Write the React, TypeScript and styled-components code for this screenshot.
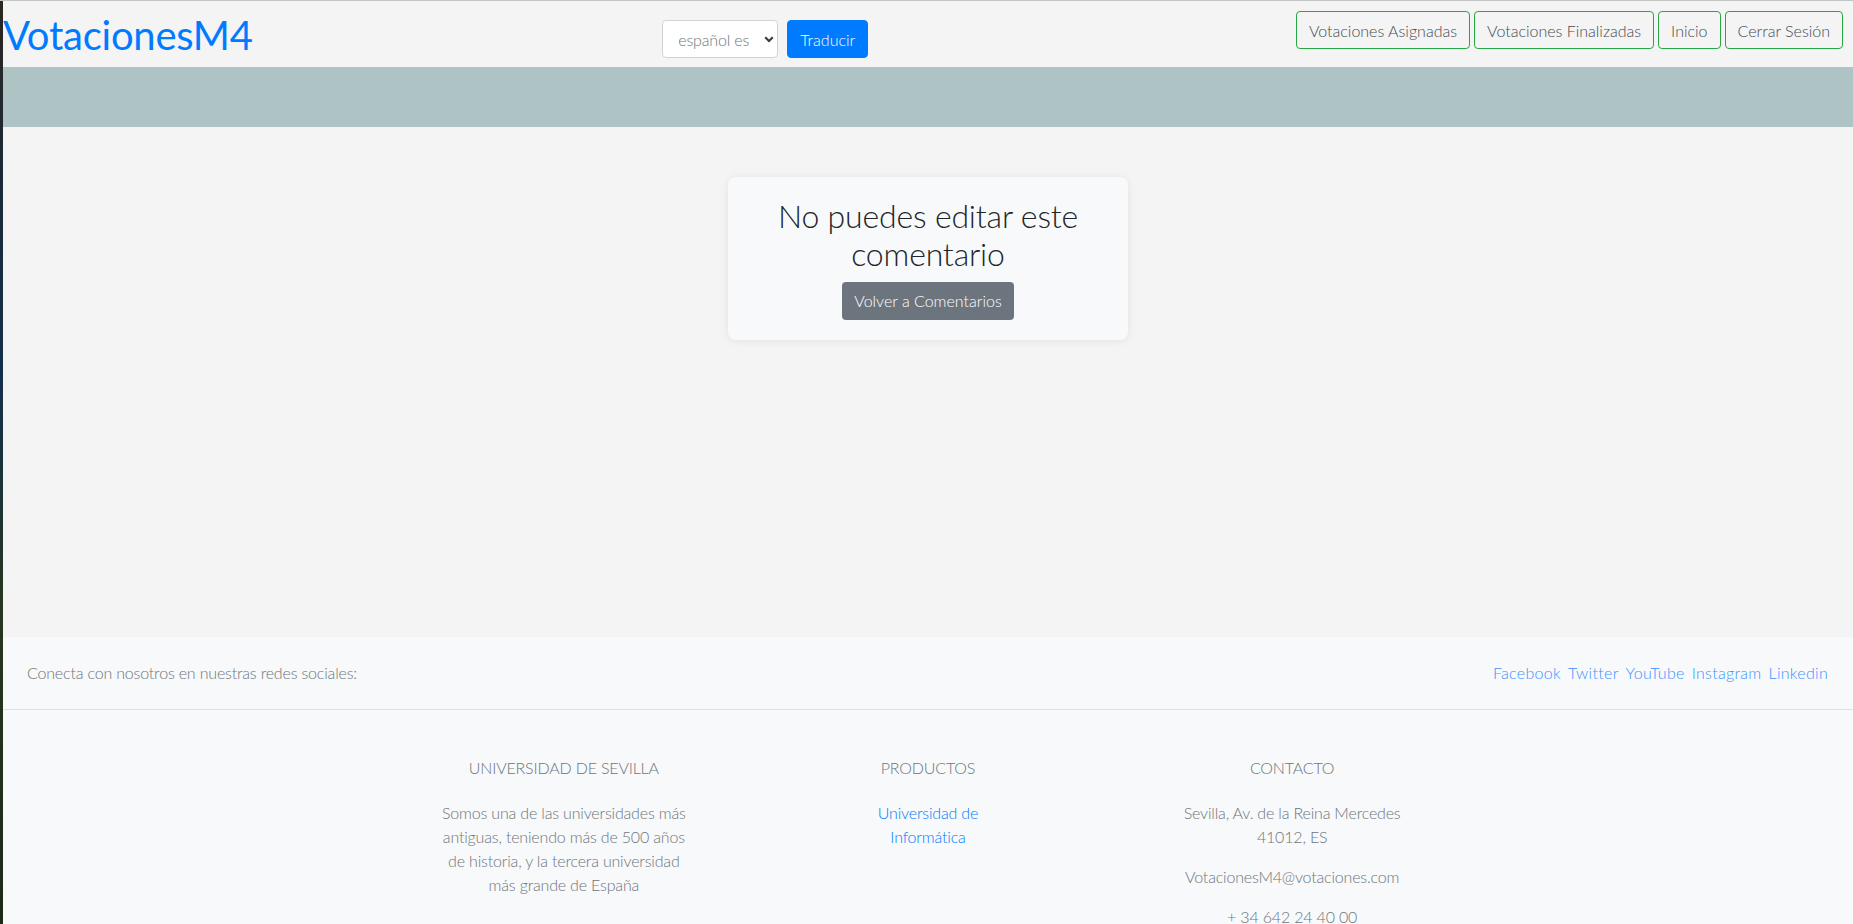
import React from 'react';
import styled, { createGlobalStyle } from 'styled-components';

const GlobalStyle = createGlobalStyle`
  html { scrollbar-width: none; }
  html::-webkit-scrollbar, body::-webkit-scrollbar { display: none; }
  * { box-sizing: border-box; }
  body {
    margin: 0;
    font-family: Lato, "Open Sans", sans-serif;
    font-weight: 300;
    font-size: 16px;
    letter-spacing: -0.011em;
    background: #1b2633;
    color: #212529;
  }
`;

const Shell = styled.div`
  display: flex;
  min-height: 100vh;
  border-top: 1px solid #c4c4c4;
`;

const DesktopEdge = styled.div`
  flex: 0 0 3px;
  background: linear-gradient(
    180deg,
    #2b2620 0%,
    #1a2a3a 20%,
    #14304a 40%,
    #26361f 65%,
    #1b2a17 100%
  );
`;

const Page = styled.div`
  flex: 1;
  min-width: 0;
  background: #f4f4f4;
  display: flex;
  flex-direction: column;
`;

const Header = styled.header`
  height: 66px;
  display: flex;
  align-items: flex-start;
  justify-content: space-between;
  padding: 10px 10px 0 0;
`;

const Logo = styled.a`
  font-family: Lato, sans-serif;
  font-weight: 400;
  font-size: 40px;
  line-height: 48px;
  letter-spacing: -0.006em;
  color: #007bff;
  text-decoration: none;
`;

const TranslateGroup = styled.form`
  display: flex;
  gap: 9px;
  margin: 9px 18px 0 0;
`;

const SelectWrap = styled.div`
  position: relative;
  display: flex;
`;

const LangSelect = styled.select`
  appearance: none;
  -webkit-appearance: none;
  width: 116px;
  height: 38px;
  padding: 0 0 0 15px;
  border: 1px solid #ced4da;
  border-radius: 4px;
  background: #fff;
  font-family: Lato, sans-serif;
  font-weight: 300;
  font-size: 16px;
  letter-spacing: -0.011em;
  color: #6c757d;
`;

const Chevron = styled.svg`
  position: absolute;
  right: 4px;
  top: 14px;
  width: 10px;
  height: 10px;
  pointer-events: none;
`;

const PrimaryButton = styled.button`
  height: 38px;
  padding: 0 12px;
  border: 1px solid #007bff;
  border-radius: 4px;
  background: #007bff;
  color: #fff;
  font-family: Lato, sans-serif;
  font-weight: 300;
  font-size: 16px;
  letter-spacing: 0;
`;

const RightNav = styled.nav`
  display: flex;
  gap: 4px;
`;

const NavButton = styled.a`
  display: inline-flex;
  align-items: center;
  height: 38px;
  padding: 0 12px;
  border: 1px solid #28a745;
  border-radius: 4px;
  color: #444b52;
  text-decoration: none;
  font-size: 16px;
  font-weight: 300;
  letter-spacing: 0;
`;

const Band = styled.div`
  height: 60px;
  background: #aec3c4;
`;

const Main = styled.main`
  min-height: 510px;
  display: flex;
  justify-content: center;
  align-items: flex-start;
  padding-top: 50px;
`;

const Card = styled.div`
  width: 400px;
  padding: 20px;
  background: #f8f9fa;
  border-radius: 8px;
  box-shadow: 0 1px 8px rgba(0, 0, 0, 0.08);
  text-align: center;
`;

const CardTitle = styled.h1`
  margin: 0 0 8px;
  font-size: 32px;
  font-weight: 300;
  line-height: 1.2;
  color: #212529;
`;

const SecondaryButton = styled.a`
  display: inline-flex;
  align-items: center;
  height: 38px;
  padding: 0 12px;
  border-radius: 4px;
  background: #6c757d;
  color: #fff;
  text-decoration: none;
  font-size: 16px;
  font-weight: 300;
  letter-spacing: 0;
`;

const Footer = styled.footer`
  background: #f8f9fa;
  color: #6c757d;
  flex: 1;
`;

const SocialBar = styled.section`
  display: flex;
  justify-content: space-between;
  align-items: center;
  padding: 24px 25px 24px 24px;
  line-height: 24px;
  border-bottom: 1px solid #dee2e6;
`;

const SocialLinks = styled.div`
  display: flex;
  gap: 7px;
`;

const SocialLink = styled.a`
  color: #3a92ff;
  font-weight: 300;
  letter-spacing: 0.3px;
  text-decoration: none;
`;

const Link = styled.a`
  color: #007bff;
  text-decoration: none;
`;

const Columns = styled.div`
  width: 1140px;
  margin: 0 auto;
  padding-top: 48px;
  display: flex;
  justify-content: space-around;
`;

const Column = styled.div<{ $w: number }>`
  width: ${(p) => p.$w}px;
  padding: 0 15px;
  text-align: center;
`;

const ColTitle = styled.h6`
  margin: 0 0 24px;
  font-size: 16px;
  font-weight: 300;
  line-height: 1.2;
  text-transform: uppercase;
  color: #6c757d;
`;

const ColText = styled.p`
  margin: 0 0 16px;
  line-height: 24px;
`;

export default function App() {
  return (
    <>
      <GlobalStyle />
      <Shell>
        <DesktopEdge />
        <Page>
          <Header>
            <Logo href="#">VotacionesM4</Logo>
            <TranslateGroup onSubmit={(e) => e.preventDefault()}>
              <SelectWrap>
                <LangSelect defaultValue="es">
                  <option value="es">español es</option>
                  <option value="en">english en</option>
                </LangSelect>
                <Chevron viewBox="0 0 10 10">
                  <path d="M1.2 3.2 L5 7 L8.8 3.2" fill="none" stroke="#343a40" strokeWidth="2" />
                </Chevron>
              </SelectWrap>
              <PrimaryButton type="submit">Traducir</PrimaryButton>
            </TranslateGroup>
            <RightNav>
              <NavButton href="#">Votaciones Asignadas</NavButton>
              <NavButton href="#">Votaciones Finalizadas</NavButton>
              <NavButton href="#">Inicio</NavButton>
              <NavButton href="#">Cerrar Sesión</NavButton>
            </RightNav>
          </Header>
          <Band />
          <Main>
            <Card>
              <CardTitle>No puedes editar este comentario</CardTitle>
              <SecondaryButton href="#">Volver a Comentarios</SecondaryButton>
            </Card>
          </Main>
          <Footer>
            <SocialBar>
              <span>Conecta con nosotros en nuestras redes sociales:</span>
              <SocialLinks>
                <SocialLink href="#">Facebook</SocialLink>
                <SocialLink href="#">Twitter</SocialLink>
                <SocialLink href="#">YouTube</SocialLink>
                <SocialLink href="#">Instagram</SocialLink>
                <SocialLink href="#">Linkedin</SocialLink>
              </SocialLinks>
            </SocialBar>
            <Columns>
              <Column $w={285}>
                <ColTitle>Universidad de Sevilla</ColTitle>
                <ColText>
                  Somos una de las universidades más antiguas, teniendo más de 500 años de historia, y la
                  tercera universidad más grande de España
                </ColText>
              </Column>
              <Column $w={190}>
                <ColTitle>Productos</ColTitle>
                <ColText>
                  <Link href="#">Universidad de Informática</Link>
                </ColText>
              </Column>
              <Column $w={285}>
                <ColTitle>Contacto</ColTitle>
                <ColText>Sevilla, Av. de la Reina Mercedes 41012, ES</ColText>
                <ColText>VotacionesM4@votaciones.com</ColText>
                <ColText>+ 34 642 24 40 00</ColText>
              </Column>
            </Columns>
          </Footer>
        </Page>
      </Shell>
    </>
  );
}
